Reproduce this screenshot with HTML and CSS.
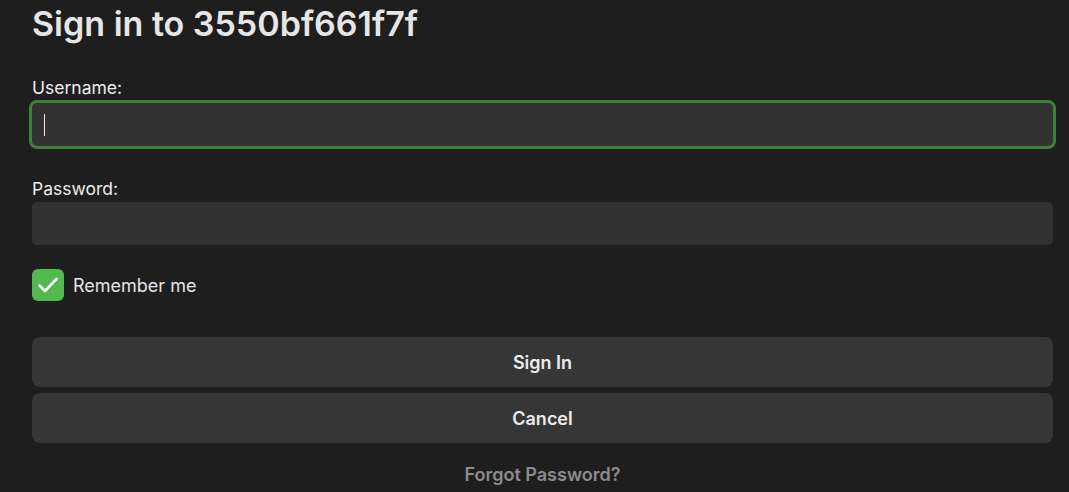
FILE: index.html
```html
<!DOCTYPE html>
<html lang="en">
<head>
<meta charset="utf-8">
<title>Sign in</title>
<link rel="stylesheet" href="styles.css">
</head>
<body>
<main class="page">
  <h1 class="title">Sign in to 3550bf661f7f</h1>
  <form class="form">
    <label class="label" for="username">Username:</label>
    <div class="input input-focus" id="username"><span class="caret"></span></div>
    <label class="label label-pw" for="password">Password:</label>
    <div class="input" id="password"></div>
    <div class="remember">
      <span class="checkbox">
        <svg width="22" height="18" viewBox="0 0 22 18"><path d="M2.5 9.5 L8 15 L19.5 3" fill="none" stroke="#fff" stroke-width="2.6" stroke-linecap="round" stroke-linejoin="round"/></svg>
      </span>
      <span class="remember-text">Remember me</span>
    </div>
    <div class="buttons">
      <div class="btn">Sign In</div>
      <div class="btn">Cancel</div>
    </div>
    <div class="forgot">Forgot Password?</div>
  </form>
</main>
</body>
</html>
```
FILE: styles.css
```css
html, body {
  margin: 0;
  padding: 0;
  background: #1e1e1e;
  height: 100%;
  overflow: hidden;
}
body {
  font-family: Inter, "Noto Sans", sans-serif;
  color: #e8e8e8;
}
.page {
  padding: 0 16px 0 32px;
}
.title {
  margin: 0;
  padding-top: 4px;
  font-size: 34px;
  line-height: 40px;
  font-weight: 600;
  letter-spacing: 0;
  color: #e6e6e6;
}
.form {
  display: flex;
  flex-direction: column;
}
.label {
  display: block;
  font-size: 17.5px;
  line-height: 20px;
  margin-top: 34px;
  margin-bottom: 5px;
  color: #ececec;
}
.label-pw {
  margin-top: 33px;
  margin-bottom: 3px;
}
.input {
  height: 43px;
  background: #323232;
  border-radius: 5px;
  box-sizing: border-box;
  display: flex;
  align-items: center;
  padding-left: 12px;
}
.input-focus {
  box-shadow: 0 0 0 3px #3e7f3a;
}
.caret {
  width: 1px;
  height: 22px;
  background: #e8e8e8;
}
.remember {
  display: flex;
  align-items: center;
  margin-top: 24px;
  gap: 9px;
}
.checkbox {
  width: 32px;
  height: 32px;
  border-radius: 6px;
  background: #53b84f;
  display: flex;
  align-items: center;
  justify-content: center;
}
.remember-text {
  font-size: 18px;
  color: #e4e4e4;
}
.buttons {
  display: flex;
  flex-direction: column;
  gap: 6px;
  margin-top: 36px;
}
.btn {
  height: 50px;
  border-radius: 8px;
  background: #363636;
  display: flex;
  align-items: center;
  justify-content: center;
  font-size: 18px;
  font-weight: 600;
  color: #ececec;
}
.forgot {
  text-align: center;
  margin-top: 21px;
  font-size: 18px;
  font-weight: 600;
  color: #8c8c8c;
}
```
